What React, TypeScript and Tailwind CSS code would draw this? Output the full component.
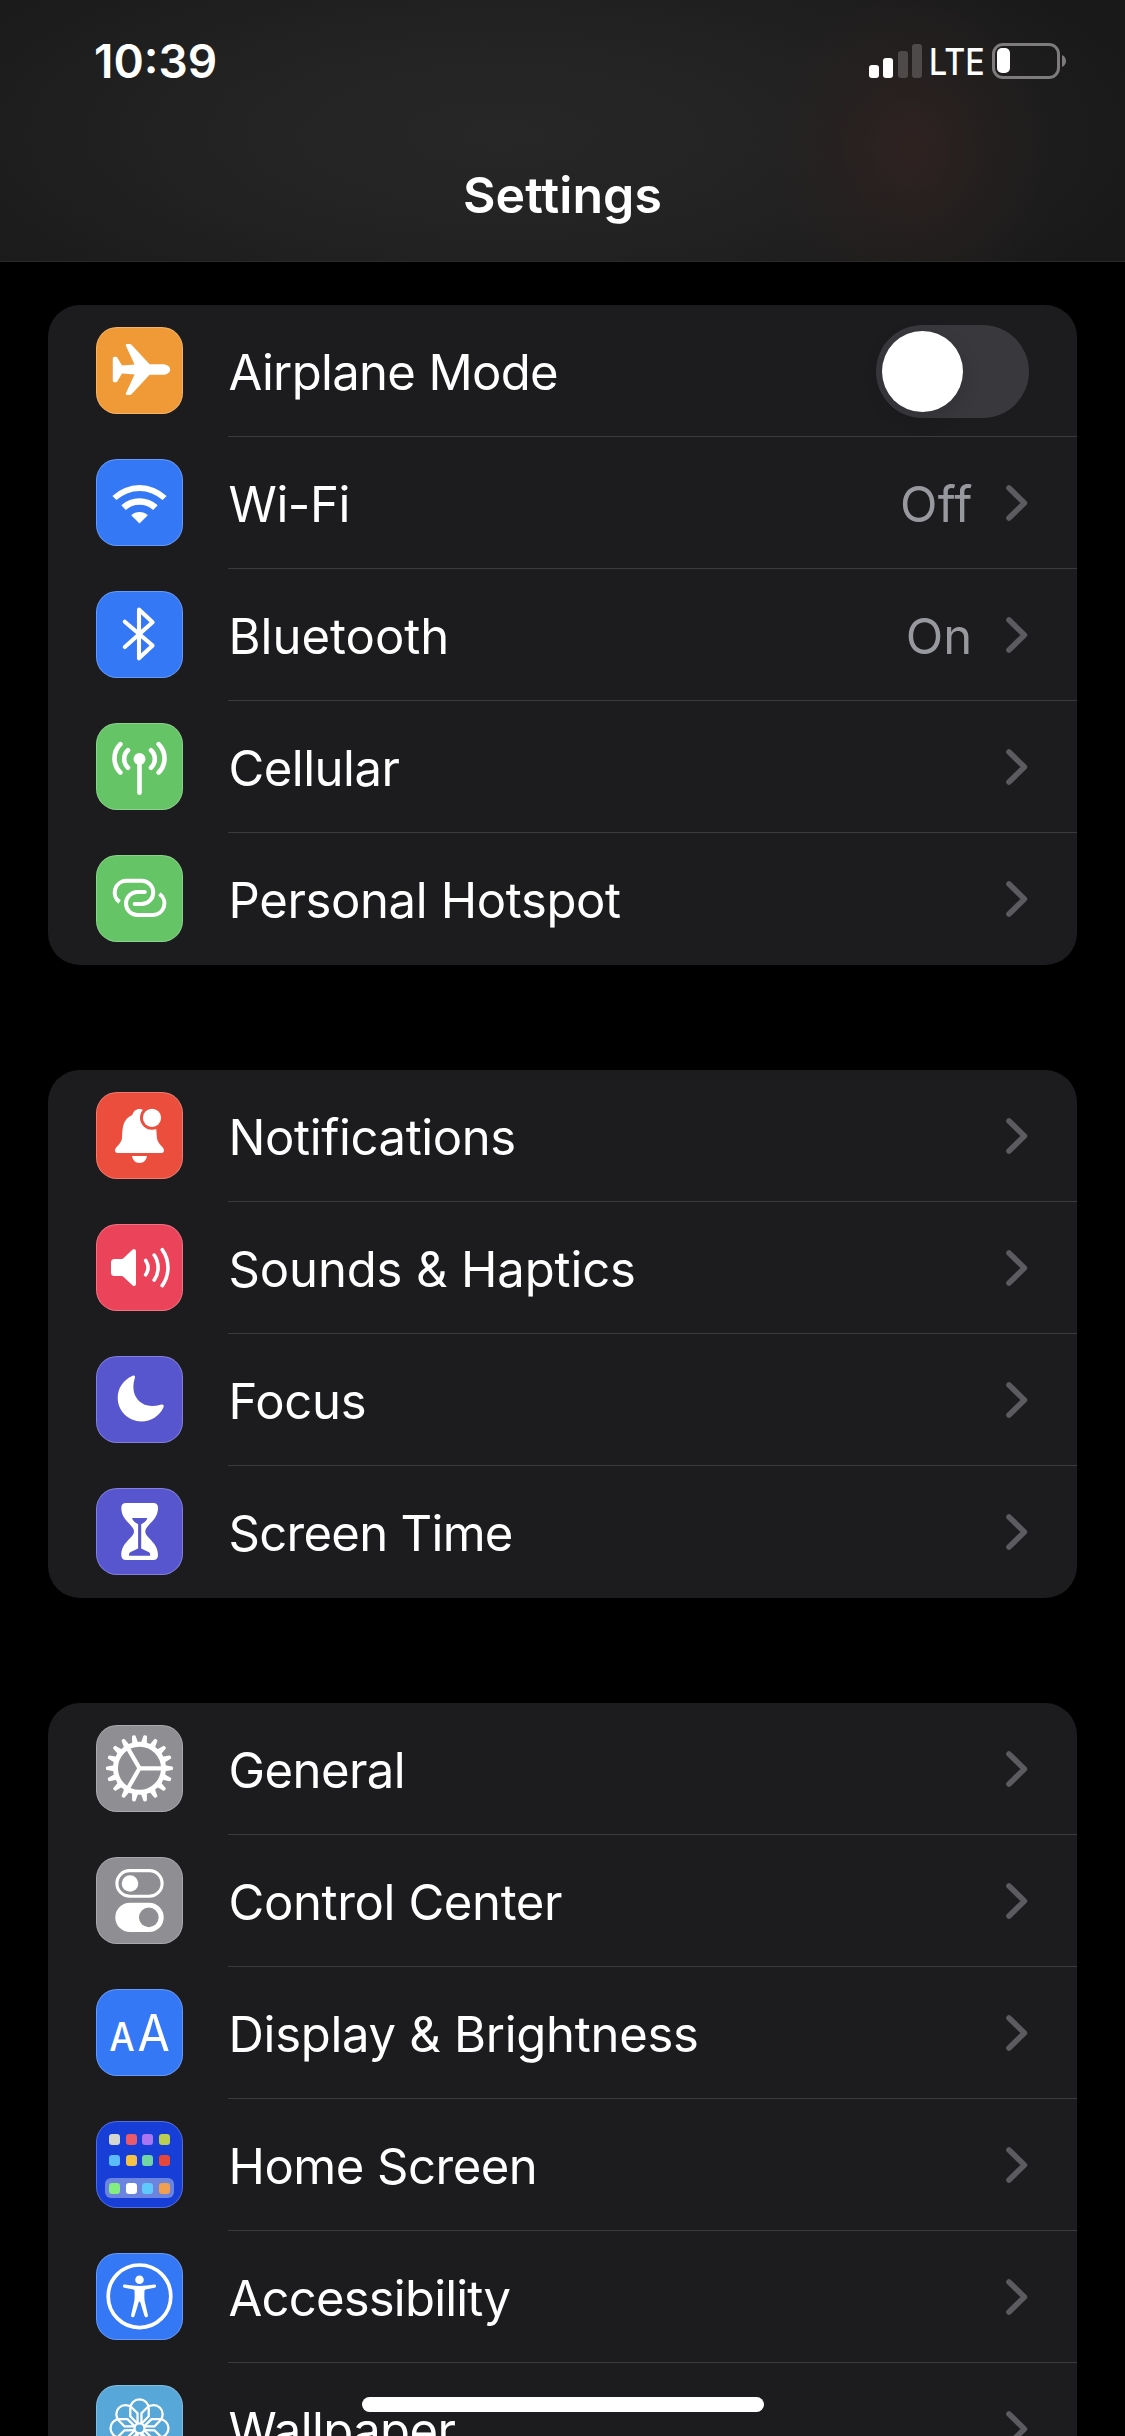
import React from "react";

type RowData = {
  label: string;
  tracking?: string;
  tile: string;
  icon: React.ReactNode;
  value?: string;
  toggle?: boolean;
};

function Glyph({ children }: { children: React.ReactNode }) {
  return (
    <svg viewBox="0 0 87 87" className="block size-full" fill="none">
      {children}
    </svg>
  );
}

const Airplane = () => (
  <Glyph>
    <path
      fill="#fff"
      d="M16.8 31.2Q16.8 29.7 18.2 29.7H19.6Q20.6 29.7 21.3 30.6L26 38.4L38.6 37.4L29.9 18.8Q29.2 17 31 17H33.6Q35 17 36 18.2L53.6 37.2H66.5C71 37.2 74.2 39.6 74.2 42.5C74.2 45.4 71 47.8 66.5 47.8H53.6L36 66.8Q35 68 33.6 68H31Q29.2 68 29.9 66.2L38.6 47.6L26 46.6L21.3 54.4Q20.6 55.3 19.6 55.3H18.2Q16.8 55.3 16.8 53.8Z"
    />
  </Glyph>
);

const Wifi = () => (
  <Glyph>
    <g fill="#fff">
      <path d="M16.4 36.9A39.4 39.4 0 0 1 70.6 36.9L66.6 41.1A34 34 0 0 0 20.4 41.1Z" />
      <path d="M25.3 46.2A27.5 27.5 0 0 1 61.7 46.2L57.2 51A20.7 20.7 0 0 0 29.8 51Z" />
      <path d="M35.2 56.2A12.5 12.5 0 0 1 51.8 56.2L43.5 64.6Z" />
    </g>
  </Glyph>
);

const Bluetooth = () => (
  <Glyph>
    <path
      stroke="#fff"
      strokeWidth="4.1"
      strokeLinecap="round"
      strokeLinejoin="round"
      d="M28.8 30.7L56.6 54.5L43 67.3V18.6L56.6 31.3L28.8 56"
    />
  </Glyph>
);

const Antenna = () => (
  <Glyph>
    <circle cx="43.5" cy="36" r="6" fill="#fff" />
    <g stroke="#fff" strokeWidth="4.6" strokeLinecap="round">
      <path d="M43.5 36V69.8" />
      <path d="M32 27.3A11.8 11.8 0 0 0 32 44.7" />
      <path d="M55 27.3A11.8 11.8 0 0 1 55 44.7" />
      <path d="M24.4 21.2A20 20 0 0 0 24.4 49.6" />
      <path d="M62.6 21.2A20 20 0 0 1 62.6 49.6" />
    </g>
  </Glyph>
);

const Hotspot = () => (
  <Glyph>
    <g stroke="#fff" strokeWidth="4">
      <path d="M23.6 47A11.7 11.7 0 0 1 30 25.8H45.6A11.6 11.6 0 0 1 45.6 49H38.5" />
      <path d="M63.4 38.9A11.5 11.5 0 0 1 57 59.9H41.4A11.4 11.4 0 0 1 41.4 37.1H48.7" />
      <path strokeLinecap="round" d="M48 37.1H48.8M39.2 49H38.6" />
    </g>
  </Glyph>
);

const Bell = () => (
  <Glyph>
    <path
      fill="#fff"
      d="M22 61Q19 61 19 58.2C19 54.6 25.4 52.4 26 46C26.6 38 26 27.3 36.3 23C37.4 19.2 40 17 43.5 17C47 17 49.6 19.2 50.7 23C61 27.3 60.4 38 61 46C61.6 52.4 68 54.6 68 58.2Q68 61 65 61Z"
    />
    <path fill="#fff" d="M36 64H51C50.4 68.2 47.6 71 43.5 71C39.4 71 36.6 68.2 36 64Z" />
    <circle cx="56" cy="25.8" r="12" fill="#eb4e3d" />
    <circle cx="56" cy="25.8" r="9.1" fill="#fff" />
  </Glyph>
);

const Speaker = () => (
  <Glyph>
    <path
      fill="#fff"
      d="M18.5 35H25.5Q26.6 35 27.4 34.2L36.4 25.8Q37.6 24.8 38.7 25.2Q40 25.6 40 27.2V60Q40 61.6 38.7 62Q37.6 62.4 36.4 61.2L27.4 52.8Q26.6 52 25.5 52H18.5Q15 52 15 48.5V38.5Q15 35 18.5 35Z"
    />
    <g stroke="#fff" strokeWidth="3.6" strokeLinecap="round">
      <path d="M49.7 36.4A13 13 0 0 1 49.7 50.8" />
      <path d="M58.2 31.1A22 22 0 0 1 58.2 56.1" />
      <path d="M66.2 25.6A31 31 0 0 1 66.2 61.6" />
    </g>
  </Glyph>
);

const Moon = () => (
  <Glyph>
    <path
      fill="#fff"
      d="M36.3 20C38.2 18.8 39.7 20 38.8 22.2C36.9 28 36.8 35 39.7 40.6C44.4 49.3 54 52 64.6 48.7C66.8 47.9 68.5 49 67.5 51.2C63.5 60 55 65.4 45.5 65.4C32.2 65.4 21.7 55 21.7 41.8C21.7 32 27.5 23.8 36.3 20Z"
    />
  </Glyph>
);

const Hourglass = () => (
  <Glyph>
    <path
      fill="#fff"
      d="M30 15H57.3Q62 15 62 20C62 32.5 49.3 37 49.3 43.5C49.3 50 62 54 62 67Q62 72 57.3 72H30Q25.3 72 25.3 67C25.3 54 38 50 38 43.5C38 37 25.3 32.5 25.3 20Q25.3 15 30 15Z"
    />
    <path
      fill="#5856ce"
      d="M36 30H51.4C50.6 33 48 34.6 45.2 36.3V60.4L53 64.2Q54.4 65 54.2 67.8H33Q32.8 65 34.2 64.2L42.1 60.4V36.3C39.3 34.6 36.8 33 36 30Z"
    />
  </Glyph>
);

const TEETH = Array.from({ length: 18 }, (_, i) => i * 20);

const Gear = () => (
  <Glyph>
    <g transform="translate(43.5 43.3)">
      <circle r="24" stroke="#fff" strokeWidth="5" />
      {TEETH.map((a) => (
        <path
          key={a}
          fill="#fff"
          d="M25.5 -3L32.6 -1.8Q33.5 -1.5 33.5 -.7V.7Q33.5 1.5 32.6 1.8L25.5 3Z"
          transform={`rotate(${a})`}
        />
      ))}
      <path stroke="#fff" strokeWidth="4.2" d="M0 0H23M0 0L-11.5 -19.9M0 0L-11.5 19.9" />
    </g>
  </Glyph>
);

const Toggles = () => (
  <Glyph>
    <rect x="20.9" y="13.6" width="45.2" height="25.6" rx="12.8" stroke="#fff" strokeWidth="3.1" />
    <circle cx="34" cy="26.5" r="8.3" fill="#fff" />
    <rect x="19.3" y="45.8" width="48.4" height="29.2" rx="14.6" fill="#fff" />
    <circle cx="52.8" cy="60.4" r="9.8" fill="#8e8e93" />
  </Glyph>
);

const LetterSizes = () => (
  <span className="flex size-full scale-x-[0.92] items-baseline justify-center gap-[3px] leading-[88px] text-white">
    <span className="text-[39px] font-medium">A</span>
    <span className="text-[51px]">A</span>
  </span>
);

const APPS = [
  "bg-[#d5d6cf]",
  "bg-[#ea5a68]",
  "bg-[#aa74f2]",
  "bg-[#b8cf54]",
  "bg-[#5bbcf9]",
  "bg-[#f5c243]",
  "bg-[#70d6a4]",
  "bg-[#e5473a]",
];
const DOCK = ["bg-[#84ee7e]", "bg-white", "bg-[#5ec9fa]", "bg-[#f0a04f]"];

const HomeGrid = () => (
  <span className="flex size-full flex-col items-center pt-[13px]">
    <span className="grid grid-cols-4 gap-x-[5.6px] gap-y-[10px]">
      {APPS.map((c) => (
        <span key={c} className={`size-[11px] rounded-[3px] ${c}`} />
      ))}
    </span>
    <span className="mt-[12px] flex h-[20px] w-[69px] items-center justify-center gap-[5.6px] rounded-[6px] bg-[#6b84df]">
      {DOCK.map((c) => (
        <span key={c} className={`size-[11px] rounded-[3px] ${c}`} />
      ))}
    </span>
  </span>
);

const Person = () => (
  <Glyph>
    <circle cx="43.5" cy="43.3" r="31.3" stroke="#fff" strokeWidth="3.7" />
    <circle cx="43.5" cy="26.8" r="4.3" fill="#fff" />
    <path
      fill="#fff"
      d="M28.8 31.6Q36 33 43.5 33Q51 33 58.2 31.6Q60 31.5 60.1 33Q60.1 34.5 58.6 34.8L49.5 36.4Q48.6 36.6 48.5 37.6C48.3 43.5 48.2 46 49 49.5L51.9 62Q52.1 63.9 50.6 64.3Q49 64.5 48.4 62.8L44.4 49.6Q43.5 47.4 42.6 49.6L38.6 62.8Q38 64.5 36.4 64.3Q34.9 63.9 35.1 62L38 49.5C38.8 46 38.7 43.5 38.5 37.6Q38.4 36.6 37.5 36.4L28.4 34.8Q26.9 34.5 26.9 33Q27 31.5 28.8 31.6Z"
    />
  </Glyph>
);

const PETALS = [0, 45, 90, 135, 180, 225, 270, 315];

const Flower = () => (
  <Glyph>
    <g transform="translate(43.5 43.3)" stroke="#fff" strokeWidth="2.3">
      {PETALS.map((a) => (
        <path
          key={a}
          d="M-1.9 -4.6L-9.2 -12V-19.8A9.2 9.2 0 0 1 9.2 -19.8V-12L1.9 -4.6"
          transform={`rotate(${a})`}
        />
      ))}
      <circle r="5" fill="#58a7d9" />
    </g>
  </Glyph>
);

const GROUPS: RowData[][] = [
  [
    { label: "Airplane Mode", tracking: "tracking-[-0.66px]", tile: "bg-[#f09a37]", icon: <Airplane />, toggle: true },
    { label: "Wi-Fi", tracking: "tracking-[-0.4px]", tile: "bg-[#3478f6]", icon: <Wifi />, value: "Off" },
    { label: "Bluetooth", tile: "bg-[#3478f6]", icon: <Bluetooth />, value: "On" },
    { label: "Cellular", tracking: "tracking-[-0.5px]", tile: "bg-[#65c466]", icon: <Antenna /> },
    { label: "Personal Hotspot", tracking: "tracking-[-0.36px]", tile: "bg-[#65c466]", icon: <Hotspot /> },
  ],
  [
    { label: "Notifications", tracking: "tracking-[-0.38px]", tile: "bg-[#eb4e3d]", icon: <Bell /> },
    { label: "Sounds & Haptics", tracking: "tracking-[-0.13px]", tile: "bg-[#eb445a]", icon: <Speaker /> },
    { label: "Focus", tracking: "tracking-[-0.3px]", tile: "bg-[#5856ce]", icon: <Moon /> },
    { label: "Screen Time", tracking: "tracking-[-0.7px]", tile: "bg-[#5856ce]", icon: <Hourglass /> },
  ],
  [
    { label: "General", tracking: "tracking-[-0.55px]", tile: "bg-[#8e8e93]", icon: <Gear /> },
    { label: "Control Center", tracking: "tracking-[-0.36px]", tile: "bg-[#8e8e93]", icon: <Toggles /> },
    { label: "Display & Brightness", tracking: "tracking-[-0.29px]", tile: "bg-[#3478f6]", icon: <LetterSizes /> },
    { label: "Home Screen", tracking: "tracking-[-0.5px]", tile: "bg-[#173ed6]", icon: <HomeGrid /> },
    { label: "Accessibility", tracking: "tracking-[-0.79px]", tile: "bg-[#3478f6]", icon: <Person /> },
    { label: "Wallpaper", tracking: "tracking-[-0.57px]", tile: "bg-[#58a7d9]", icon: <Flower /> },
  ],
];

function Chevron() {
  return (
    <svg viewBox="0 0 22 36" className="block h-[36px] w-[22px]" fill="none">
      <path d="M3 3L18.4 18L3 33" stroke="#5b5b60" strokeWidth="5.6" strokeLinecap="round" strokeLinejoin="round" />
    </svg>
  );
}

function Switch() {
  return (
    <span className="flex h-[93px] w-[153px] items-center rounded-full bg-[#39383d] pl-[6px]">
      <span className="size-[81px] rounded-full bg-white shadow-[0_6px_20px_rgba(0,0,0,0.12)]" />
    </span>
  );
}

function Row({ row, last }: { row: RowData; last: boolean }) {
  return (
    <div className="flex h-[132px] shrink-0 pl-[48px]">
      <div
        className={`mt-[22px] size-[87px] overflow-hidden rounded-[21px] border border-white/25 bg-clip-border ${row.tile}`}
      >
        <div className="-m-px size-[87px]">{row.icon}</div>
      </div>
      <div
        className={`ml-[45px] flex flex-1 items-center border-b pr-[48px] ${
          last ? "border-transparent" : "border-[#3b3b3e]"
        }`}
      >
        <span className={`flex-1 pl-[0.5px] pt-[5px] text-[49px] leading-[60px] text-white ${row.tracking ?? ""}`}>
          {row.label}
        </span>
        {row.value && (
          <span className="mr-[33.5px] pt-[5px] text-[49px] leading-[60px] tracking-[0.2px] text-[#98989f]">
            {row.value}
          </span>
        )}
        {row.toggle ? (
          <span className="pt-[2px]">
            <Switch />
          </span>
        ) : (
          <span className="mr-px pt-px">
            <Chevron />
          </span>
        )}
      </div>
    </div>
  );
}

function StatusBar() {
  return (
    <div className="flex h-[120px] items-center justify-between pl-[94px] pr-[59px]">
      <span className="pt-px text-[46px] font-semibold leading-[56px] text-white">10:39</span>
      <div className="flex items-center pt-px">
        <div className="flex h-[34px] items-end gap-[4.4px]">
          <span className="h-[13px] w-[10px] rounded-[3px] bg-white" />
          <span className="h-[20px] w-[10px] rounded-[3px] bg-white" />
          <span className="h-[27px] w-[10px] rounded-[3px] bg-[#4f4a4a]" />
          <span className="h-[34px] w-[10px] rounded-[3px] bg-[#4f4a4a]" />
        </div>
        <span className="ml-[6.5px] flex w-[63.5px] justify-start pt-[3px]">
          <span className="origin-left scale-x-[0.87] text-[37px] font-medium leading-[44px] text-white">LTE</span>
        </span>
        <div className="flex items-center">
          <div className="flex h-[36px] w-[68px] items-center rounded-[11px] border-[3px] border-[#7d7b7b] pl-[2px]">
            <span className="h-[25px] w-[13px] rounded-[5px] bg-white" />
          </div>
          <svg viewBox="0 0 4 12" className="ml-[2px] block h-[12px] w-[4px]">
            <path d="M0 0C2.6 1.2 4 3.4 4 6S2.6 10.8 0 12Z" fill="#7d7b7b" />
          </svg>
        </div>
      </div>
    </div>
  );
}

export default function App() {
  return (
    <div className="relative flex h-[2436px] w-[1125px] flex-col overflow-hidden bg-black font-['Inter','Liberation_Sans',sans-serif]">
      <header className="flex h-[262px] shrink-0 flex-col border-b border-[#2a2a2b] bg-[#191919] bg-[radial-gradient(ellipse_150px_170px_at_910px_148px,rgba(48,34,33,0.9),rgba(44,33,32,0.5)_45%,transparent),radial-gradient(ellipse_680px_240px_at_500px_135px,#272727,rgba(37,37,37,0.85)_40%,transparent)]">
        <StatusBar />
        <h1 className="pt-[45px] text-center text-[50px] font-semibold leading-[60px] tracking-[0.1px] text-white">
          Settings
        </h1>
      </header>

      <main className="flex flex-col gap-[105px] px-[48px] pt-[43px]">
        {GROUPS.map((group, g) => (
          <section key={g} className="flex shrink-0 flex-col overflow-hidden rounded-[32px] bg-[#1c1c1e]">
            {group.map((row, i) => (
              <Row key={row.label} row={row} last={i === group.length - 1} />
            ))}
          </section>
        ))}
      </main>

      <div className="absolute bottom-[24px] left-[362px] h-[15px] w-[402px] rounded-full bg-white" />
    </div>
  );
}
